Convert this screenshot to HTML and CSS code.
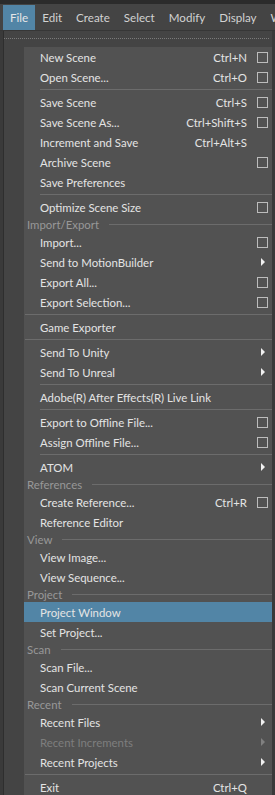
FILE: index.html
```html
<!DOCTYPE html>
<html lang="en">
<head>
    <meta charset="UTF-8">
    <title>File Menu</title>
    <link rel="stylesheet" href="styles.css">
</head>
<body>

    <!-- Top menu bar -->
    <div class="topstrip"></div>
    <div class="menubar">
        <span class="mb-item active">File</span>
        <span class="mb-item">Edit</span>
        <span class="mb-item">Create</span>
        <span class="mb-item">Select</span>
        <span class="mb-item">Modify</span>
        <span class="mb-item">Display</span>
        <span class="mb-item">Windows</span>
    </div>

    <!-- File popup -->
    <div class="popup">
        <div class="tearoff"><div class="dots"></div></div>
        <div class="menu">
            <div class="gutter"></div>
            <div class="list">
                <div class="row"><span class="label">New Scene</span><span class="key">Ctrl+N</span><span class="slot"><i class="box"></i></span></div>
                <div class="row"><span class="label">Open Scene...</span><span class="key">Ctrl+O</span><span class="slot"><i class="box"></i></span></div>
                <div class="sep"></div>
                <div class="row"><span class="label">Save Scene</span><span class="key">Ctrl+S</span><span class="slot"><i class="box"></i></span></div>
                <div class="row"><span class="label">Save Scene As...</span><span class="key">Ctrl+Shift+S</span><span class="slot"><i class="box"></i></span></div>
                <div class="row"><span class="label">Increment and Save</span><span class="key">Ctrl+Alt+S</span><span class="slot"></span></div>
                <div class="row"><span class="label">Archive Scene</span><span class="slot"><i class="box"></i></span></div>
                <div class="row"><span class="label">Save Preferences</span><span class="slot"></span></div>
                <div class="sep"></div>
                <div class="row"><span class="label">Optimize Scene Size</span><span class="slot"><i class="box"></i></span></div>
                <div class="section"><span>Import/Export</span></div>
                <div class="row"><span class="label">Import...</span><span class="slot"><i class="box"></i></span></div>
                <div class="row"><span class="label">Send to MotionBuilder</span><span class="slot"><i class="arrow"></i></span></div>
                <div class="row"><span class="label">Export All...</span><span class="slot"><i class="box"></i></span></div>
                <div class="row"><span class="label">Export Selection...</span><span class="slot"><i class="box"></i></span></div>
                <div class="sep full"></div>
                <div class="row"><span class="label">Game Exporter</span><span class="slot"></span></div>
                <div class="sep full"></div>
                <div class="row"><span class="label">Send To Unity</span><span class="slot"><i class="arrow"></i></span></div>
                <div class="row"><span class="label">Send To Unreal</span><span class="slot"><i class="arrow"></i></span></div>
                <div class="sep"></div>
                <div class="row"><span class="label">Adobe(R) After Effects(R) Live Link</span><span class="slot"></span></div>
                <div class="sep"></div>
                <div class="row"><span class="label">Export to Offline File...</span><span class="slot"><i class="box"></i></span></div>
                <div class="row"><span class="label">Assign Offline File...</span><span class="slot"><i class="box"></i></span></div>
                <div class="sep"></div>
                <div class="row"><span class="label">ATOM</span><span class="slot"><i class="arrow"></i></span></div>
                <div class="section"><span>References</span></div>
                <div class="row"><span class="label">Create Reference...</span><span class="key">Ctrl+R</span><span class="slot"><i class="box"></i></span></div>
                <div class="row"><span class="label">Reference Editor</span><span class="slot"></span></div>
                <div class="section"><span>View</span></div>
                <div class="row"><span class="label">View Image...</span><span class="slot"></span></div>
                <div class="row"><span class="label">View Sequence...</span><span class="slot"></span></div>
                <div class="section"><span>Project</span></div>
                <div class="row hover"><span class="label">Project Window</span><span class="slot"></span></div>
                <div class="row"><span class="label">Set Project...</span><span class="slot"></span></div>
                <div class="section"><span>Scan</span></div>
                <div class="row"><span class="label">Scan File...</span><span class="slot"></span></div>
                <div class="row"><span class="label">Scan Current Scene</span><span class="slot"></span></div>
                <div class="section"><span>Recent</span></div>
                <div class="row"><span class="label">Recent Files</span><span class="slot"><i class="arrow"></i></span></div>
                <div class="row disabled"><span class="label">Recent Increments</span><span class="slot"><i class="arrow"></i></span></div>
                <div class="row"><span class="label">Recent Projects</span><span class="slot"><i class="arrow"></i></span></div>
                <div class="sep full"></div>
                <div class="row"><span class="label">Exit</span><span class="key">Ctrl+Q</span><span class="slot"></span></div>
            </div>
        </div>
    </div>

</body>
</html>
```

FILE: styles.css
```css
body {
    margin: 0;
    padding: 0;
    width: 275px;
    height: 795px;
    overflow: hidden;
    background-color: #3a3a3a;
    font-family: "Lato", "Liberation Sans", sans-serif;
    font-size: 11.4px;
    color: #e4e4e4;
}

/* Menu bar */
.topstrip {
    height: 4px;
    background-color: #2b2b2b;
}
.menubar {
    height: 26px;
    display: flex;
    align-items: stretch;
    background-color: #444444;
    border-bottom: 1px solid #363636;
    padding-left: 3px;
    white-space: nowrap;
    overflow: hidden;
}
.mb-item {
    display: flex;
    align-items: center;
    padding: 0 7px;
    font-size: 11.6px;
    color: #d2d2d2;
}
.mb-item.active {
    background-color: #5285a6;
    color: #e6e6e6;
    margin-top: 1px;
}

/* Popup */
.popup {
    margin-left: 3px;
    width: 269px;
    border-left: 1px solid #2e2e2e;
    box-sizing: border-box;
}
.tearoff {
    height: 16px;
    background-color: #444444;
    display: flex;
    align-items: center;
    padding: 0 2px 0 0;
}
.dots {
    flex-grow: 1;
    height: 1px;
    margin-top: -1px;
    background-image: linear-gradient(to right, #7a7a7a 50%, transparent 50%);
    background-size: 2px 1px;
}
.menu {
    display: flex;
}
.gutter {
    width: 20px;
    background-color: #444444;
    flex-shrink: 0;
}
.list {
    flex-grow: 1;
    background-color: #525252;
}

/* Rows */
.row {
    height: 20px;
    display: flex;
    align-items: center;
    padding-left: 16px;
    padding-right: 4px;
}
.row.hover {
    background-color: #5285a6;
}
.row.disabled {
    color: #7e7e7e;
}
.label {
    flex-grow: 1;
    white-space: nowrap;
}
.key {
    margin-right: 10px;
    white-space: nowrap;
}
.slot {
    width: 11px;
    height: 11px;
    display: flex;
    align-items: center;
    justify-content: flex-end;
    flex-shrink: 0;
}
.box {
    width: 11px;
    height: 11px;
    box-sizing: border-box;
    border: 1px solid #bcbcbc;
}
.arrow {
    width: 0;
    height: 0;
    margin-right: 3px;
    border-left: 4px solid #f0f0f0;
    border-top: 4px solid transparent;
    border-bottom: 4px solid transparent;
}
.disabled .arrow {
    border-left-color: #808080;
}

/* Separators and section headers */
.sep {
    height: 5px;
    display: flex;
    align-items: center;
    margin-left: 16px;
}
.sep::after {
    content: "";
    flex-grow: 1;
    height: 1px;
    background-color: #6c6c6c;
}
.sep.full {
    margin-left: 1px;
}
.section {
    height: 15px;
    display: flex;
    align-items: center;
    padding-left: 3px;
    color: #989898;
}
.section::after {
    content: "";
    flex-grow: 1;
    height: 1px;
    margin-left: 10px;
    background-color: #6c6c6c;
}
```
